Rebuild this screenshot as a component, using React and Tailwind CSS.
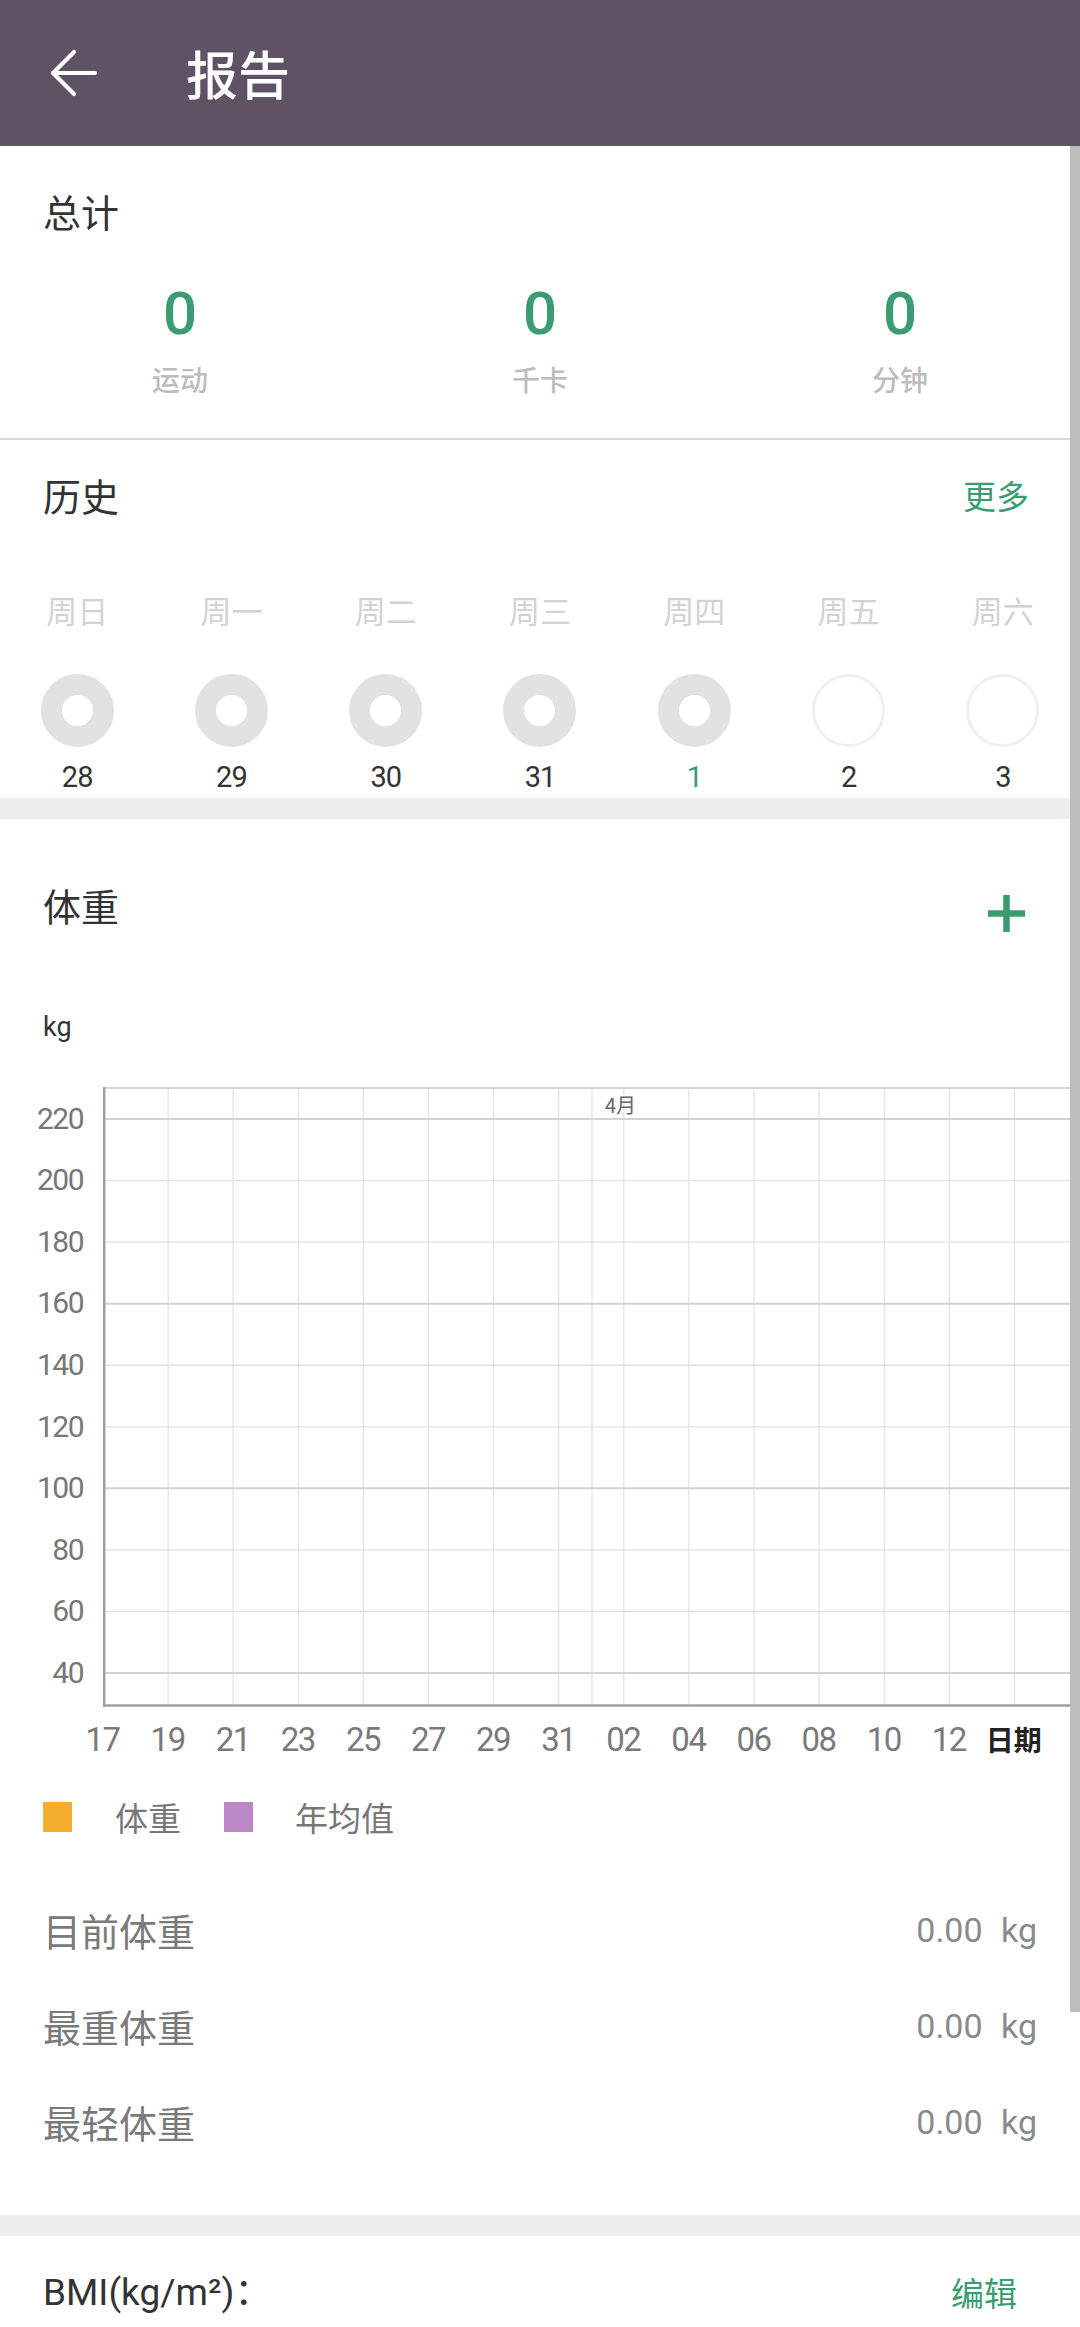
import React from 'react';
import { ArrowLeft } from 'lucide-react';

const cjk = "font-['Noto_Sans_CJK_SC',sans-serif]";
const narrow = "font-['Liberation_Sans_Narrow','Roboto','Noto_Sans_CJK_SC',sans-serif]";
const roboto = "font-['Roboto','Noto_Sans_CJK_SC',sans-serif]";

const totals = [
    { value: '0', label: '运动' },
    { value: '0', label: '千卡' },
    { value: '0', label: '分钟' },
];

const days = [
    { name: '周日', date: '28', done: true },
    { name: '周一', date: '29', done: true },
    { name: '周二', date: '30', done: true },
    { name: '周三', date: '31', done: true },
    { name: '周四', date: '1', done: true, today: true },
    { name: '周五', date: '2', done: false },
    { name: '周六', date: '3', done: false },
];

const yLabels = ['220', '200', '180', '160', '140', '120', '100', '80', '60', '40'];
const xLabels = ['17', '19', '21', '23', '25', '27', '29', '31', '02', '04', '06', '08', '10', '12'];

const stats = ['目前体重', '最重体重', '最轻体重'];

const WeightChart = () => {
    const hLines = yLabels.map((_, i) => 32 + i * 61.56);
    const vLines = Array.from({ length: 14 }, (_, i) => 65.1 * (i + 1));

    return (
        <div className="flex">
            {/* y axis labels */}
            <div className={`w-[103px] pr-[20px] pt-[1px] flex flex-col items-end text-[30px] leading-none tracking-[-1.5px] text-[#777] ${narrow}`}>
                {yLabels.map((v) => (
                    <div key={v} className="h-[61.56px] flex items-center">{v}</div>
                ))}
            </div>

            {/* plot */}
            <div className="relative flex-1">
                <svg width="977" height="620" className="block">
                    {vLines.map((x) => (
                        <line key={x} x1={x} x2={x} y1={0} y2={618} stroke="#e2e2e2" strokeWidth="1.2" />
                    ))}
                    <line x1={489} x2={489} y1={0} y2={618} stroke="#e2e2e2" strokeWidth="1.2" />
                    {hLines.map((y, i) => (
                        <line
                            key={y}
                            x1={0}
                            x2={977}
                            y1={y}
                            y2={y}
                            stroke={i % 3 === 0 ? '#d3d3d3' : '#e2e2e2'}
                            strokeWidth={i % 3 === 0 ? 2 : 1.3}
                        />
                    ))}
                    <line x1={0} x2={977} y1={1} y2={1} stroke="#d4d4d4" strokeWidth="2" />
                    <line x1={1.25} x2={1.25} y1={0} y2={620} stroke="#a0a0a0" strokeWidth="2.5" />
                    <line x1={0} x2={977} y1={618.5} y2={618.5} stroke="#a0a0a0" strokeWidth="2.5" />
                </svg>
                <span className={`absolute left-[502px] top-[8px] text-[20px] leading-none text-[#666] ${cjk}`}>4月</span>
            </div>
        </div>
    );
};

const App = () => {
    return (
        <div className={`relative w-[1080px] h-[2327px] overflow-hidden bg-white ${roboto}`}>
            {/* Header */}
            <header className="h-[146px] bg-[#5e5264] flex items-center">
                <ArrowLeft size={72} strokeWidth={1.4} color="#ffffff" className="ml-[38px]" />
                <h1 className={`ml-[76px] text-[52px] leading-none font-medium text-white ${cjk}`}>报告</h1>
            </header>

            {/* Totals */}
            <section className="pt-[46px] pb-[45px] border-b-2 border-[#dadada]">
                <h2 className={`pl-[43px] text-[38px] leading-none text-[#333] ${cjk}`}>总计</h2>
                <div className="grid grid-cols-3 mt-[54px]">
                    {totals.map((t) => (
                        <div key={t.label} className="flex flex-col items-center">
                            <div className={`text-[60px] leading-none font-medium text-[#3b9c72] ${narrow}`}>{t.value}</div>
                            <div className={`mt-[21px] text-[28px] leading-none font-medium text-[#bdbdbd] ${cjk}`}>{t.label}</div>
                        </div>
                    ))}
                </div>
            </section>

            {/* History */}
            <section className="pt-[36px] pb-[6px]">
                <div className="flex items-center justify-between pl-[43px] pr-[51px]">
                    <h2 className={`text-[38px] leading-none text-[#333] ${cjk}`}>历史</h2>
                    <span className={`text-[33px] leading-none text-[#3b9c72] ${cjk}`}>更多</span>
                </div>
                <div className="grid grid-cols-7 mt-[80px]">
                    {days.map((d) => (
                        <div key={d.name} className="flex flex-col items-center">
                            <div className={`text-[31px] leading-none text-[#d3d3d3] ${cjk}`}>{d.name}</div>
                            {d.done ? (
                                <div className="mt-[49px] w-[73px] h-[73px] rounded-full border-[21px] border-[#e2e2e4]" />
                            ) : (
                                <div className="mt-[49px] w-[73px] h-[73px] rounded-full border-[3px] border-[#f0f0f0]" />
                            )}
                            <div className={`mt-[16px] text-[29px] leading-none tracking-[-1px] ${narrow} ${d.today ? 'text-[#3b9c72]' : 'text-[#333]'}`}>
                                {d.date}
                            </div>
                        </div>
                    ))}
                </div>
            </section>

            <div className="h-[21px] bg-[#eceef0]" />

            {/* Weight */}
            <section className="pt-[67px] pb-[45px]">
                <div className="flex items-start justify-between pl-[43px] pr-[55px]">
                    <h2 className={`text-[38px] leading-none text-[#333] ${cjk}`}>体重</h2>
                    <svg width="37" height="37" viewBox="0 0 37 37" className="mt-[9px]">
                        <rect x="0" y="15.25" width="37" height="6.5" fill="#3b9c72" />
                        <rect x="15.25" y="0" width="6.5" height="37" fill="#3b9c72" />
                    </svg>
                </div>

                <div className="pl-[43px] mt-[82px] text-[27px] leading-none text-[#333]">kg</div>

                <div className="mt-[46px]">
                    <WeightChart />
                </div>

                {/* x axis labels */}
                <div className="h-[64px] pl-[70px] flex items-center">
                    {xLabels.map((x) => (
                        <div key={x} className={`w-[65.1px] text-center text-[33px] leading-none tracking-[-1.5px] text-[#7a7a7a] ${narrow}`}>{x}</div>
                    ))}
                    <div className={`w-[65.1px] text-center text-[28px] leading-none font-bold text-[#222] ${cjk}`}>日期</div>
                </div>

                {/* legend */}
                <div className="mt-[31px] h-[30px] pl-[43px] flex items-center">
                    <span className="w-[29px] h-[30px] bg-[#f5ad2d]" />
                    <span className={`ml-[43px] text-[33px] leading-none text-[#777] ${cjk}`}>体重</span>
                    <span className="ml-[43px] w-[29px] h-[30px] bg-[#bb88c5]" />
                    <span className={`ml-[42px] text-[33px] leading-none text-[#777] ${cjk}`}>年均值</span>
                </div>

                {/* stats */}
                <div className="mt-[50px]">
                    {stats.map((s) => (
                        <div key={s} className="h-[96px] pl-[43px] pr-[43px] flex items-center justify-between">
                            <span className={`text-[38px] leading-none text-[#7a7a7a] ${cjk}`}>{s}</span>
                            <span className="text-[34px] leading-none text-[#8a8a8a] [word-spacing:10px]">0.00 kg</span>
                        </div>
                    ))}
                </div>
            </section>

            <div className="h-[21px] bg-[#eceef0]" />

            {/* BMI */}
            <section className="pt-[38px] pl-[43px] pr-[63px] flex items-center justify-between">
                <span className="text-[37px] leading-none text-[#333]">BMI(kg/m²)：</span>
                <span className={`text-[33px] leading-none text-[#3b9c72] ${cjk}`}>编辑</span>
            </section>

            {/* scrollbar thumb */}
            <div className="absolute right-0 top-[146px] w-[10px] h-[1866px] bg-[#bdbdbd]" />
        </div>
    );
};

export default App;
